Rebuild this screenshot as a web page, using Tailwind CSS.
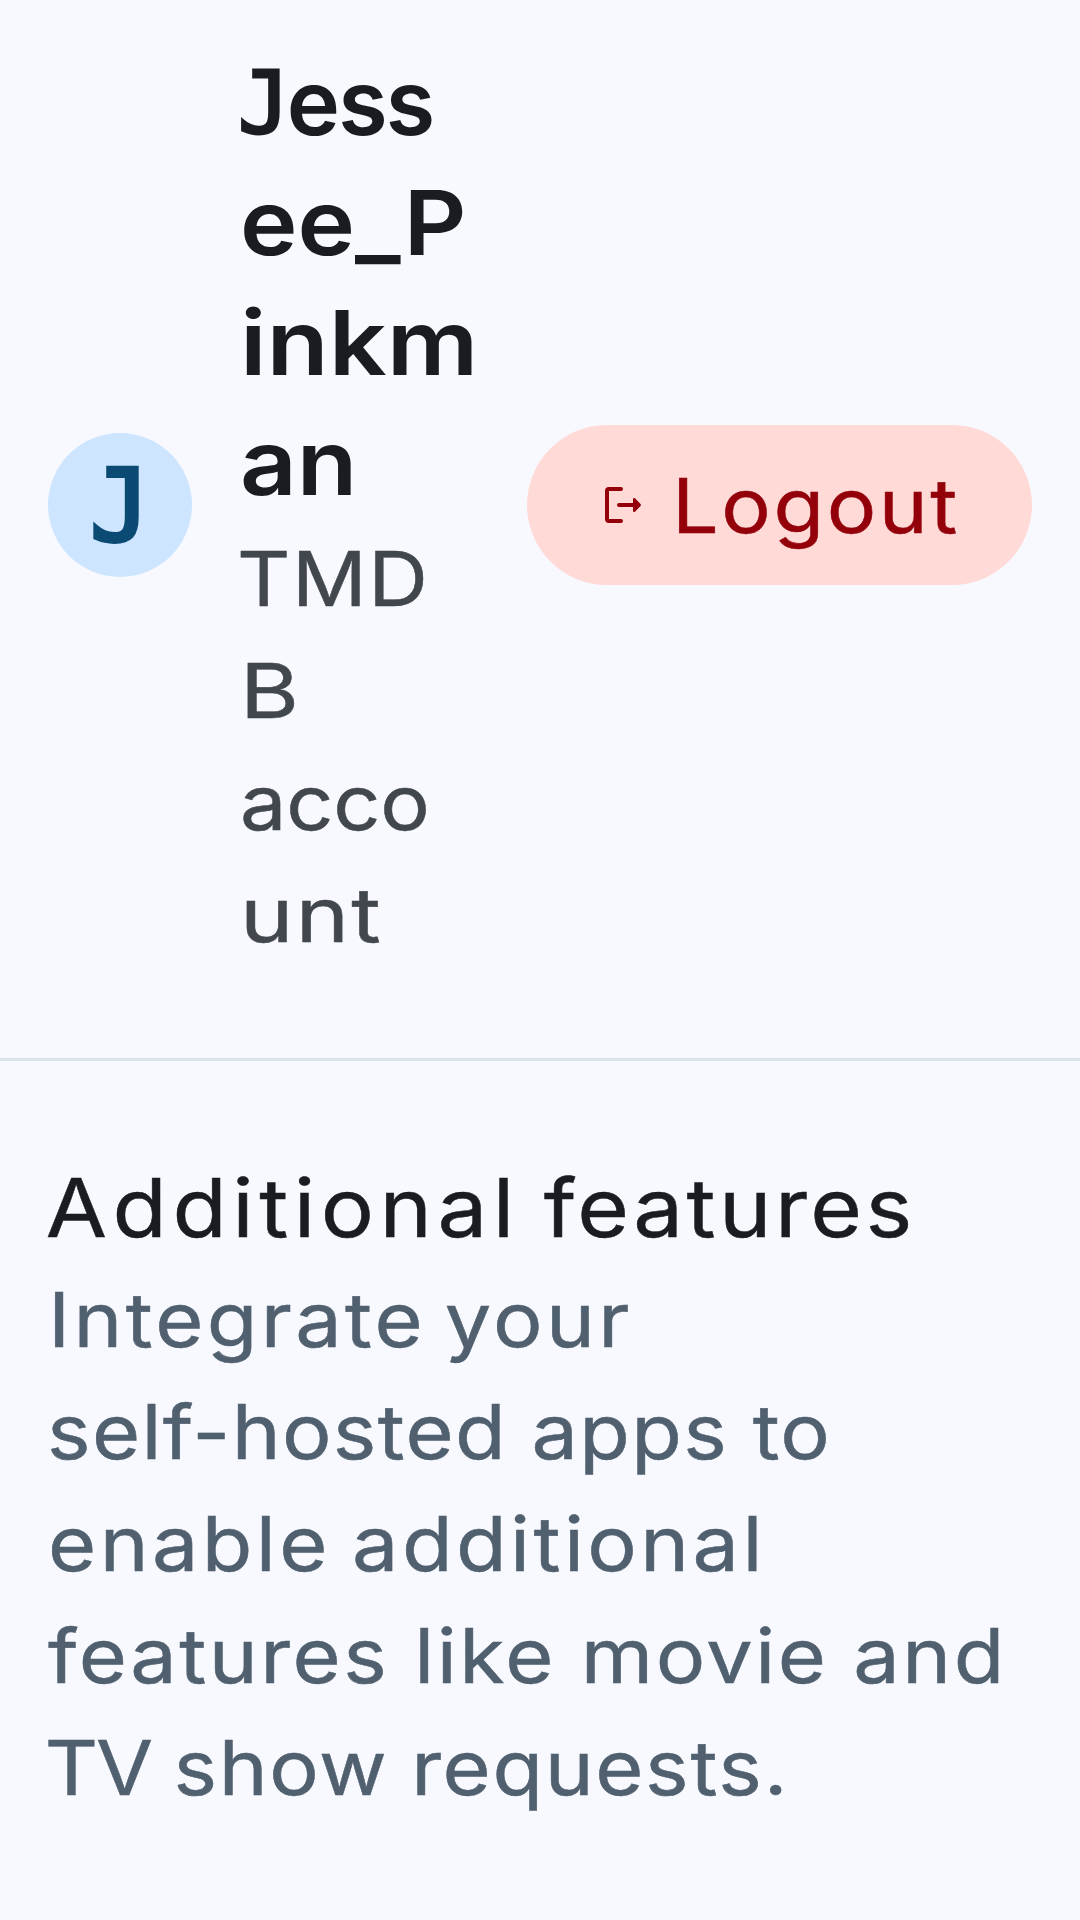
<!DOCTYPE html>
<html lang="en">
<head>
<meta charset="utf-8">
<title>Account settings</title>
<script src="https://cdn.jsdelivr.net/npm/@tailwindcss/browser@4"></script>
</head>
<body class="min-h-screen overflow-hidden bg-[#f8f9ff] font-['Inter',sans-serif]">
<header class="flex h-[1061px] items-center border-b-[3px] border-[#dce3eb] px-12 pb-12">
  <div class="flex size-36 shrink-0 items-center justify-center rounded-full bg-[#cee5ff] pt-1">
    <span class="font-['DejaVu_Sans_Mono',monospace] text-[100px] leading-none text-[#0b4a72] [-webkit-text-stroke:4px_#0b4a72]">J</span>
  </div>
  <div class="mt-[3px] ml-12 w-[239px] shrink-0 whitespace-nowrap">
    <h1 class="text-[90px] leading-[120px] font-semibold text-[#191c20]">
      <span class="flex h-[120px] items-baseline tracking-[-1.8px]"><span class="relative -top-[2px] -mr-[3px] -ml-[2px] font-['DejaVu_Sans_Mono',monospace] text-[86px] font-normal tracking-normal [-webkit-text-stroke:3px_#191c20]">J</span>ess</span>
      <span class="block origin-left scale-x-[1.08]">ee_P</span>
      <span class="block origin-left scale-x-[1.13]">inkm</span>
      <span class="block origin-left scale-x-[1.1]">an</span>
    </h1>
    <p class="text-[75.2px] leading-[112px] font-normal text-[#42474e] [-webkit-text-stroke:0.5px_#42474e]">
      <span class="-ml-[3px] block origin-left scale-x-110 tracking-[1.4px]">TMD</span>
      <span class="block origin-left scale-x-120">B</span>
      <span class="block origin-left scale-x-110 tracking-[-0.2px]">acco</span>
      <span class="block origin-left scale-x-120 tracking-[1.9px]">unt</span>
    </p>
  </div>
  <button class="ml-12 flex h-40 w-[505px] shrink-0 items-center gap-8 rounded-full bg-[#ffdad6] pl-[78px] text-[#93000a]">
    <svg class="h-9 w-9 shrink-0" viewBox="0 0 36 36" fill="none" stroke="currentColor" stroke-width="4" stroke-linecap="round">
      <path d="M16 2H4a2 2 0 0 0-2 2v28a2 2 0 0 0 2 2h12M14 18h16"/>
      <path d="M28 12.2v11.6c0 1.1 1.2 1.6 2 .9l5.3-5.5c.8-.7.8-1.7 0-2.4L30 11.3c-.8-.7-2-.2-2 .9z" fill="currentColor" stroke="none"/>
    </svg>
    <span class="-ml-px origin-left scale-x-110 pt-px text-[75.2px] leading-[112px] font-normal tracking-[2.3px] [-webkit-text-stroke:0.5px_#93000a]">Logout</span>
  </button>
</header>
<section class="px-12 pt-[91px] whitespace-nowrap">
  <h2 class="origin-left scale-x-110 text-[80.7px] leading-[112px] font-normal tracking-[5px] text-[#191c20] [word-spacing:-6px] [-webkit-text-stroke:0.5px_#191c20]"><span class="-ml-[2px]">Additional</span> <span class="tracking-[3.1px]">features</span></h2>
  <p class="origin-left scale-x-110 text-[75.2px] leading-[112px] font-normal text-[#50606f] [-webkit-text-stroke:0.5px_#50606f]">
    <span class="block tracking-[3px] [word-spacing:-7px]">Integrate your</span>
    <span class="-ml-px block tracking-[1.2px]">self-hosted apps to</span>
    <span class="block tracking-[3.1px] [word-spacing:-5px]">enable additional</span>
    <span class="block tracking-[2.3px] [word-spacing:-1px]">features like movie and</span>
    <span class="-ml-[3px] block tracking-[1.5px] [word-spacing:-2px]"><span class="tracking-[-2px]">TV</span> show requests.</span>
  </p>
</section>
</body>
</html>
